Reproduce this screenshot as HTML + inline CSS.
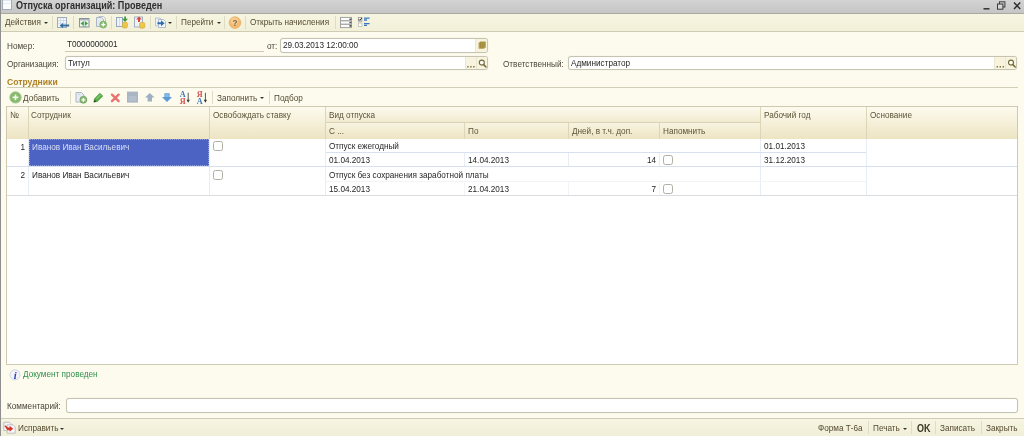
<!DOCTYPE html>
<html><head><meta charset="utf-8">
<style>
html,body{margin:0;padding:0;}
body{width:1024px;height:436px;overflow:hidden;background:#fcfbee;font-family:"Liberation Sans",sans-serif;font-size:8.2px;color:#4a4638;position:relative;}
.abs{position:absolute;}
.t{position:absolute;white-space:nowrap;line-height:10px;will-change:transform;transform:scaleY(1.12);transform-origin:0 55%;}
.v{color:#262626;}
#title{left:-6px;top:-6px;width:1040px;height:20px;background:linear-gradient(#d3d3d3 6px,#c5c5c5);border-bottom:1.6px solid #a9a9a3;box-sizing:border-box;}
#tb{left:-6px;top:14px;width:1040px;height:17px;background:linear-gradient(#f6f5e0,#f2f0d9);border-bottom:1px solid #cfccb5;}
#leftb{left:-6px;top:-6px;width:7px;height:450px;background:#8e8e8e;}
.inp{position:absolute;background:#fff;border:1px solid #c6c3b0;border-radius:3px;box-sizing:border-box;box-shadow:0 0 1px #d8d3bd;overflow:hidden;}
.btn{position:absolute;top:0;bottom:0;background:#f7f3de;border-left:1px solid #ebe6d0;}
.sep{position:absolute;width:1px;background:#e0dbc5;}
#bb{left:-6px;top:418px;width:1040px;height:26px;background:linear-gradient(#f6f5e1,#f0eed7 18px);border-top:1px solid #cfccb5;}
.hl{position:absolute;height:1px;}
.vl{position:absolute;width:1px;}
svg{position:absolute;overflow:visible;will-change:transform;}
.cb{position:absolute;width:10px;height:10px;box-sizing:border-box;border:1px solid #b0aea3;border-radius:2.5px;background:#fefefe;}
.dd{position:absolute;width:0;height:0;border-left:2px solid transparent;border-right:2px solid transparent;border-top:2.5px solid #333;}
#root{position:absolute;left:0;top:0;width:1024px;height:436px;filter:blur(0.45px);}
</style></head><body><div id="root">
<div class="abs" id="title"></div>
<div class="abs" id="tb"></div>
<div class="abs" id="bb"></div>
<div class="abs" id="leftb"></div>

<!-- title -->
<div class="abs" style="left:2px;top:-1px;width:10px;height:11.4px;background:linear-gradient(#dfe8f2 0,#dfe8f2 2px,#fafcfe 2px,#fafcfe 4px,#e6edf5 4px,#e6edf5 5px,#fafcfe 5px);border:1px solid #a3adba;border-top:none;box-sizing:border-box;"></div>
<div class="t" style="left:16.3px;top:1px;font-weight:bold;font-size:9.1px;color:#2e2e2e;">Отпуска организаций: Проведен</div>
<!-- window controls -->
<svg style="left:983px;top:0" width="40" height="13" viewBox="983 0 40 13">
 <rect x="983.5" y="8" width="6" height="1.6" fill="#3a3a3a"/>
 <rect x="999.5" y="1.8" width="5.4" height="5.2" fill="none" stroke="#3a3a3a" stroke-width="1"/>
 <rect x="997.5" y="4" width="5.4" height="5.2" fill="#d6d6d6" stroke="#3a3a3a" stroke-width="1"/>
 <path d="M1014 2.6 L1020.2 9 M1020.2 2.6 L1014 9" stroke="#2e2e2e" stroke-width="1.5" fill="none"/>
</svg>
<!-- toolbar icons -->
<svg style="left:0;top:13px" width="380" height="18" viewBox="0 13 380 18">
 <!-- 1 sheet + blue arrow -->
 <rect x="57.5" y="17.5" width="9" height="10" fill="#f1f5fa" stroke="#9eabbd" stroke-width="1"/>
 <path d="M60.5 18 V27 M63.5 18 V27 M58 20.5 H66 M58 23.5 H66" stroke="#c9d4e4" stroke-width="0.7"/>
 <path d="M59.6 25.6 L63 22.9 V24.6 H69.2 V26.6 H63 V28.3 Z" fill="#35719f"/>
 <!-- 2 window + green arrows -->
 <rect x="79.5" y="18.5" width="9.5" height="8.5" fill="#e9f3ea" stroke="#8b939c" stroke-width="1"/>
 <rect x="80" y="19" width="8.5" height="1.4" fill="#a9b3bd"/>
 <path d="M80.6 23.4 L83.8 21 V25.8 Z M88 23.4 L84.8 21 V25.8 Z" fill="#3f9a3f"/>
 <path d="M82.4 26 Q84.3 27 86.2 26" stroke="#5aa85a" stroke-width="0.7" fill="none"/>
 <!-- 3 copy + green plus -->
 <path d="M96.5 17.5 H101.5 L103.5 19.5 V26.5 H96.5 Z" fill="#e4eaf1" stroke="#a9b5c4" stroke-width="1"/>
 <path d="M98.5 16.5 H103.5 L105.5 18.5 V25.5" fill="none" stroke="#b9c3d0" stroke-width="1"/>
 <circle cx="103.2" cy="24.6" r="3.5" fill="#88bd74" stroke="#74a862" stroke-width="0.6"/>
 <path d="M101.3 24.6 H105.3 M103.3 22.6 V26.6" stroke="#fff" stroke-width="1.3"/>
 <!-- 4 sheet + green down arrow + cylinder -->
 <rect x="116.5" y="17.5" width="6" height="9" fill="#eef3fa" stroke="#98a7bd" stroke-width="1"/>
 <path d="M119.5 18 V26" stroke="#c9d4e4" stroke-width="0.7"/>
 <path d="M122 18.8 H124.2 V16.6 H126 V18.8 H128 L125 22 Z" fill="#3d9a3d"/>
 <rect x="122.4" y="22.2" width="5" height="5.8" rx="1.6" fill="#ecc84a" stroke="#cfa52e" stroke-width="0.6"/>
 <!-- 5 sheet + red up arrow + cylinder -->
 <rect x="134.5" y="17" width="8" height="10" fill="#eef1f6" stroke="#a3afc2" stroke-width="1"/>
 <path d="M136.2 19.6 L139 16.4 L141.8 19.6 H140 V22 H138 V19.6 Z" fill="#d8453c"/>
 <rect x="139.6" y="22.4" width="5.2" height="5.8" rx="1.6" fill="#ecc84a" stroke="#cfa52e" stroke-width="0.6"/>
 <!-- 6 docs + blue arrow -->
 <path d="M155.5 18 H160 L162 20 V26 H155.5 Z" fill="#eef2f7" stroke="#b6c0ce" stroke-width="0.9"/>
 <path d="M158.5 19.5 H163.5 L165.5 21.5 V27.5 H158.5 Z" fill="#f3f6fa" stroke="#a9b5c6" stroke-width="0.9"/>
 <path d="M157.4 22.2 H161 V20.2 L164.6 23.2 L161 26.2 V24.2 H157.4 Z" fill="#2f6fb0"/>
 <!-- help -->
 <circle cx="235" cy="22.6" r="5.8" fill="#f2bb72" stroke="#e5ad62" stroke-width="0.8"/>
 <circle cx="234.4" cy="21" r="3.6" fill="#f9d49a" opacity="0.7"/>
 <text x="235" y="25.6" font-family="Liberation Sans" font-weight="bold" font-size="8.2" fill="#7d6a52" text-anchor="middle">?</text>
 <!-- list icon -->
 <rect x="340.5" y="17.4" width="11" height="10.2" fill="#fcfcfc" stroke="#9a9a9a" stroke-width="0.9"/>
 <path d="M341 20.8 H351 M341 24.2 H351" stroke="#7c7c7c" stroke-width="0.9"/>
 <path d="M349.4 18.4 h2 v1.6 h-2z M349.4 21.7 h2 v1.6 h-2z M349.4 25.1 h2 v1.6 h-2z" fill="#555"/>
 <!-- checkbox list -->
 <rect x="358.3" y="17.6" width="3.6" height="3.6" fill="#fff" stroke="#8a8a8a" stroke-width="0.7"/>
 <path d="M358.8 19.2 L359.9 20.4 L361.8 18" stroke="#222" stroke-width="1" fill="none"/>
 <rect x="358.3" y="23" width="3.6" height="3.6" fill="#fff" stroke="#b0b0b0" stroke-width="0.7"/>
 <path d="M364 18.2 H369.6 M364 20 H367 M364 23.6 H369.6 M364 25.4 H367" stroke="#3a78c4" stroke-width="1.3"/>
</svg>


<!-- toolbar -->
<div class="t" style="left:5px;top:18px;color:#544a30;">Действия</div><div class="dd" style="left:44px;top:22px;"></div>
<div class="sep" style="left:52px;top:16px;height:13px;"></div>
<div class="sep" style="left:73px;top:16px;height:13px;"></div>
<div class="sep" style="left:111px;top:16px;height:13px;"></div>
<div class="sep" style="left:150px;top:16px;height:13px;"></div>
<div class="dd" style="left:168px;top:22px;"></div>
<div class="sep" style="left:176px;top:16px;height:13px;"></div>
<div class="t" style="left:181px;top:18px;color:#544a30;">Перейти</div><div class="dd" style="left:217px;top:22px;"></div>
<div class="sep" style="left:224px;top:16px;height:13px;"></div>
<div class="sep" style="left:245px;top:16px;height:13px;"></div>
<div class="t" style="left:250px;top:18px;color:#544a30;">Открыть начисления</div>
<div class="sep" style="left:335px;top:16px;height:13px;"></div>


<!-- form labels -->
<div class="t" style="left:7px;top:42px;">Номер:</div>
<div class="t v" style="left:67px;top:40px;">T0000000001</div>
<div class="hl" style="left:65px;top:51.4px;width:199px;background:#cfc9b2;"></div>
<div class="t" style="left:267px;top:42px;">от:</div>
<div class="inp" style="left:280px;top:38.4px;width:208px;height:14.2px;"><div class="btn" style="right:0;width:11px;"></div></div>
<div class="t v" style="left:283px;top:41.3px;">29.03.2013 12:00:00</div>

<div class="t" style="left:7px;top:60px;">Организация:</div>
<div class="inp" style="left:65px;top:56.4px;width:423px;height:13.9px;"><div class="btn" style="right:0;width:21px;"></div><div class="btn" style="right:0;width:10.5px;"></div></div>
<div class="t v" style="left:68px;top:59.4px;">Титул</div>
<div class="t" style="left:503px;top:60px;">Ответственный:</div>
<div class="inp" style="left:568px;top:56.4px;width:449px;height:13.9px;"><div class="btn" style="right:0;width:21px;"></div><div class="btn" style="right:0;width:10.5px;"></div></div>
<div class="t v" style="left:571px;top:59.4px;">Администратор</div>
<svg style="left:460px;top:36px" width="560" height="38" viewBox="460 36 560 38">
 <!-- calendar -->
 <path d="M478.6 42.2 H480 V41.4 H485.8 V47.8 H484.4 V48.8 H478.6 Z" fill="#b29c48"/>
 <path d="M480.6 42 V48 M482.4 42 V48 M484 42 V47.6" stroke="#8e7a2e" stroke-width="0.5"/>
 <!-- org dots + lens -->
 <path d="M467.2 66.8 h1.4 M470.2 66.8 h1.4 M473.2 66.8 h1.4" stroke="#7d7440" stroke-width="1.4"/>
 <circle cx="481.8" cy="62.6" r="2.5" fill="#fffef4" stroke="#6f6a3a" stroke-width="1.1"/>
 <path d="M483.6 64.6 L486 67" stroke="#6f6a3a" stroke-width="1.5" stroke-linecap="round"/>
 <!-- resp dots + lens -->
 <path d="M996.6 66.8 h1.4 M999.6 66.8 h1.4 M1002.6 66.8 h1.4" stroke="#7d7440" stroke-width="1.4"/>
 <circle cx="1011" cy="62.6" r="2.5" fill="#fffef4" stroke="#6f6a3a" stroke-width="1.1"/>
 <path d="M1012.8 64.6 L1015.2 67" stroke="#6f6a3a" stroke-width="1.5" stroke-linecap="round"/>
</svg>



<div class="t" style="left:7px;top:77px;font-weight:bold;color:#ad7f22;font-size:8.6px;">Сотрудники</div>
<div class="hl" style="left:7px;top:87px;width:1011px;background:#d2ceb8;"></div>

<!-- table toolbar -->
<div class="t" style="left:23px;top:93.5px;color:#544a30;"><span style="text-decoration:underline;">Д</span>обавить</div>
<div class="sep" style="left:70px;top:91px;height:13px;"></div>
<div class="sep" style="left:212px;top:91px;height:13px;"></div>
<div class="t" style="left:217px;top:93.5px;color:#544a30;">Заполнить</div><div class="dd" style="left:260px;top:97px;"></div>
<div class="sep" style="left:269px;top:91px;height:13px;"></div>
<div class="t" style="left:274px;top:93.5px;color:#544a30;">Подбор</div>
<svg style="left:0;top:89px" width="220" height="17" viewBox="0 89 220 17">
 <!-- add -->
 <circle cx="15.5" cy="97.4" r="5.7" fill="#86b96a" stroke="#a9c898" stroke-width="0.9"/>
 <path d="M12.6 97.4 H18.4 M15.5 94.5 V100.3" stroke="#f4faf0" stroke-width="1.6"/>
 <!-- copy -->
 <path d="M76 92.5 H81.5 L84 95 V102 H76 Z" fill="#e7ecf2" stroke="#aab6c5" stroke-width="1"/>
 <path d="M78 94.5 H80.5" stroke="#c5ceda" stroke-width="0.8"/>
 <circle cx="83.4" cy="99.8" r="3.5" fill="#8dba78" stroke="#6c9a58" stroke-width="0.7"/>
 <path d="M81.5 99.8 H85.3 M83.4 97.9 V101.7" stroke="#fff" stroke-width="1.2"/>
 <!-- pencil -->
 <path d="M93.8 102.2 L94.6 98.6 L99.8 93.2 L102.8 96 L97.4 101.4 Z" fill="#55b046" stroke="#3a8a34" stroke-width="0.5"/>
 <path d="M93.8 102.2 L94.4 99.6 L96.4 101.6 Z" fill="#2a4a22"/>
 <path d="M96.6 98.8 L100.6 94.8" stroke="#a8e098" stroke-width="0.9"/>
 <!-- X -->
 <path d="M112 94.7 L118.6 101.2 M118.6 94.7 L112 101.2" stroke="#ea7470" stroke-width="2.4" stroke-linecap="round"/>
 <!-- grey square -->
 <rect x="127" y="91.6" width="11" height="11" fill="#a9b5c3"/>
 <rect x="128.5" y="96" width="8" height="5" fill="#b4bfcc"/>
 <!-- up arrow -->
 <path d="M149.8 93 L154.6 97.6 H152 V101.6 H147.6 V97.6 H145 Z" fill="#9fb0c2"/>
 <!-- down arrow -->
 <path d="M167 102 L172 97 H169.6 V93.2 H164.4 V97 H162 Z" fill="#5d9bd8"/>
 <path d="M165.2 94 H168.8 V97 H165.2Z" fill="#86b8e8"/>
 <!-- sort AZ -->
 <text x="182.6" y="97.2" font-family="Liberation Serif" font-weight="bold" font-size="8.2" fill="#3f78b4" text-anchor="middle">А</text>
 <text x="182.6" y="103.6" font-family="Liberation Serif" font-weight="bold" font-size="8.2" fill="#d45050" text-anchor="middle">Я</text>
 <path d="M188.2 92.8 V100.6" stroke="#444" stroke-width="0.9"/><path d="M186.6 99.8 L188.2 102.8 L189.8 99.8 Z" fill="#333"/>
 <!-- sort ZA -->
 <text x="199.8" y="97.2" font-family="Liberation Serif" font-weight="bold" font-size="8.2" fill="#d45050" text-anchor="middle">Я</text>
 <text x="199.8" y="103.6" font-family="Liberation Serif" font-weight="bold" font-size="8.2" fill="#3f78b4" text-anchor="middle">А</text>
 <path d="M205.4 92.8 V100.6" stroke="#444" stroke-width="0.9"/><path d="M203.8 99.8 L205.4 102.8 L207 99.8 Z" fill="#333"/>
</svg>



<!-- table -->
<div class="abs" id="tbl" style="left:6px;top:106px;width:1012px;height:259px;background:#fff;border:1px solid #cfc9b1;box-sizing:border-box;"></div>
<div class="abs" style="left:7px;top:107px;width:1010px;height:32px;background:linear-gradient(#fdfbee,#ede4c3);box-sizing:border-box;"></div>
<div class="abs" style="left:326px;top:107px;width:434px;height:15px;background:linear-gradient(#fdfbee,#f1ead0);"></div>
<div class="abs" style="left:326px;top:123px;width:434px;height:16px;background:linear-gradient(#f8f4e0,#ede4c3);"></div>
<!-- header lines -->
<div class="vl" style="left:28px;top:107px;height:32px;background:#dcd5b8;"></div>
<div class="vl" style="left:209px;top:107px;height:32px;background:#dcd5b8;"></div>
<div class="vl" style="left:325px;top:107px;height:32px;background:#dcd5b8;"></div>
<div class="vl" style="left:760px;top:107px;height:32px;background:#dcd5b8;"></div>
<div class="vl" style="left:866px;top:107px;height:32px;background:#dcd5b8;"></div>
<div class="hl" style="left:326px;top:122px;width:434px;background:#d9d2b4;"></div>
<div class="vl" style="left:464px;top:123px;height:16px;background:#dcd5b8;"></div>
<div class="vl" style="left:568px;top:123px;height:16px;background:#dcd5b8;"></div>
<div class="vl" style="left:659px;top:123px;height:16px;background:#dcd5b8;"></div>
<!-- header text -->
<div class="t" style="left:10px;top:110.7px;color:#5a5338;">№</div>
<div class="t" style="left:31px;top:110.7px;color:#5a5338;">Сотрудник</div>
<div class="t" style="left:213px;top:110.7px;color:#5a5338;">Освобождать ставку</div>
<div class="t" style="left:329px;top:110.7px;color:#5a5338;">Вид отпуска</div>
<div class="t" style="left:329px;top:126.5px;color:#5a5338;">С ...</div>
<div class="t" style="left:468px;top:126.5px;color:#5a5338;">По</div>
<div class="t" style="left:572px;top:126.5px;color:#5a5338;">Дней, в т.ч. доп.</div>
<div class="t" style="left:663px;top:126.5px;color:#5a5338;">Напомнить</div>
<div class="t" style="left:764px;top:110.7px;color:#5a5338;">Рабочий год</div>
<div class="t" style="left:870px;top:110.7px;color:#5a5338;">Основание</div>
<!-- body lines -->
<div class="vl" style="left:28px;top:139px;height:56px;background:#e8ecf3;"></div>
<div class="vl" style="left:209px;top:139px;height:56px;background:#e8ecf3;"></div>
<div class="vl" style="left:325px;top:139px;height:56px;background:#e8ecf3;"></div>
<div class="vl" style="left:760px;top:139px;height:56px;background:#e8ecf3;"></div>
<div class="vl" style="left:866px;top:139px;height:56px;background:#e8ecf3;"></div>
<div class="hl" style="left:7px;top:166px;width:1010px;background:#d7e0ef;"></div>
<div class="hl" style="left:7px;top:195px;width:1010px;background:#d9dde0;"></div>
<div class="hl" style="left:326px;top:152px;width:540px;background:#d7e0ef;"></div>
<div class="hl" style="left:326px;top:181px;width:540px;background:#f2f4f7;"></div>
<div class="vl" style="left:464px;top:153px;height:13px;background:#e8ecf3;"></div>
<div class="vl" style="left:568px;top:153px;height:13px;background:#e8ecf3;"></div>
<div class="vl" style="left:659px;top:153px;height:13px;background:#e8ecf3;"></div>
<div class="vl" style="left:464px;top:182px;height:13px;background:#f2f4f7;"></div>
<div class="vl" style="left:568px;top:182px;height:13px;background:#f2f4f7;"></div>
<div class="vl" style="left:659px;top:182px;height:13px;background:#f2f4f7;"></div>
<!-- selected cell -->
<div class="abs" style="left:29px;top:139.3px;width:179.6px;height:26.8px;background:#4c63c4;outline:1px dotted #93a2e2;outline-offset:-1px;"></div>
<!-- body text -->
<div class="t v" style="left:6.5px;top:142.6px;width:18px;text-align:right;">1</div>
<div class="t" style="left:32px;top:142.6px;color:#d9dff7;">Иванов Иван Васильевич</div>
<div class="cb" style="left:213.4px;top:140.9px;"></div>
<div class="t v" style="left:329px;top:142.3px;">Отпуск ежегодный</div>
<div class="t v" style="left:329px;top:156px;">01.04.2013</div>
<div class="t v" style="left:468px;top:156px;">14.04.2013</div>
<div class="t v" style="left:600px;top:156px;width:56px;text-align:right;">14</div>
<div class="cb" style="left:662.8px;top:155.4px;"></div>
<div class="t v" style="left:764px;top:142.3px;">01.01.2013</div>
<div class="t v" style="left:764px;top:156px;">31.12.2013</div>

<div class="t v" style="left:6.5px;top:170.7px;width:18px;text-align:right;">2</div>
<div class="t v" style="left:32px;top:170.7px;">Иванов Иван Васильевич</div>
<div class="cb" style="left:213.4px;top:169.6px;"></div>
<div class="t v" style="left:329px;top:171px;">Отпуск без сохранения заработной платы</div>
<div class="t v" style="left:329px;top:184.5px;">15.04.2013</div>
<div class="t v" style="left:468px;top:184.5px;">21.04.2013</div>
<div class="t v" style="left:600px;top:184.5px;width:56px;text-align:right;">7</div>
<div class="cb" style="left:662.8px;top:183.9px;"></div>

<!-- status -->
<div class="t" style="left:23px;top:370px;color:#2f8f4c;">Документ проведен</div>
<div class="t" style="left:7px;top:401.5px;">Комментарий:</div>
<div class="inp" style="left:66px;top:398px;width:952px;height:15px;"></div>

<!-- bottom bar -->
<div class="t" style="left:18px;top:424px;color:#544a30;">Исправить</div><div class="dd" style="left:60px;top:428px;"></div>
<div class="t" style="left:818px;top:424px;color:#544a30;">Форма Т-6а</div>
<div class="sep" style="left:868px;top:421px;height:13px;"></div>
<div class="t" style="left:873px;top:424px;color:#544a30;">Печать</div><div class="dd" style="left:903px;top:428px;"></div>
<div class="sep" style="left:911px;top:421px;height:13px;"></div>
<div class="t" style="left:917px;top:423.5px;color:#3a3424;font-weight:bold;font-size:9px;">OK</div>
<div class="sep" style="left:935px;top:421px;height:13px;"></div>
<div class="t" style="left:940px;top:424px;color:#544a30;">Записать</div>
<div class="sep" style="left:981px;top:421px;height:13px;"></div>
<div class="t" style="left:986px;top:424px;color:#544a30;">Закрыть</div>
<svg style="left:0;top:366px" width="30" height="70" viewBox="0 366 30 70">
 <!-- info -->
 <circle cx="15" cy="374.8" r="5" fill="#f4f5fb" stroke="#cfd3e4" stroke-width="1"/>
 <text x="15.2" y="378.6" font-family="Liberation Serif" font-style="italic" font-weight="bold" font-size="10.6" fill="#2a3fb4" text-anchor="middle">i</text>
 <!-- fix icon -->
 <path d="M3.8 422.3 H9.6 L11.6 424.3 V430.6 H3.8 Z" fill="#f6f6f6" stroke="#b2b2b2" stroke-width="0.8"/><path d="M7.2 424.8 H13 L15.2 427 V433.2 H7.2 Z" fill="#f8f8f8" stroke="#b2b2b2" stroke-width="0.8"/>
 <path d="M5.6 427.4 H9.6 V425.8 L13.2 428.8 L9.6 431.8 V430.2 H7.6 Z" fill="#d8342c"/>
 <path d="M5 425.8 L8 429" stroke="#d8342c" stroke-width="1.5"/>
</svg>


</div></body></html>
